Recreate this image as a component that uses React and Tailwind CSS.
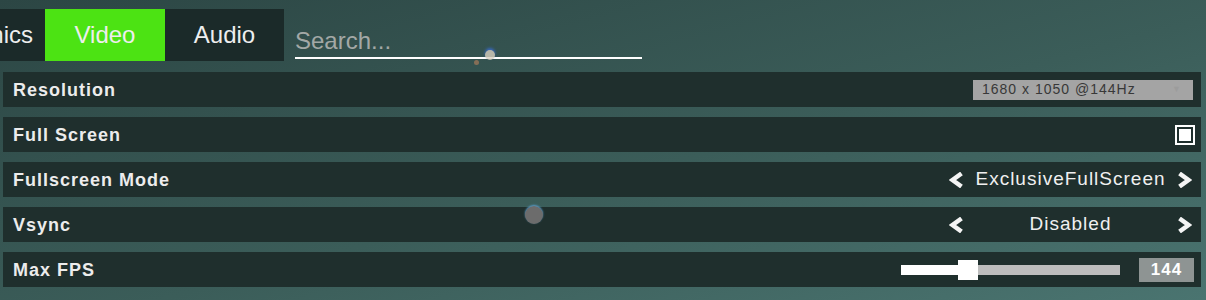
import React from 'react';

function Chevron({ dir }) {
  const pts = dir === 'left' ? '12.5,1.5 3.5,8 12.5,14.5' : '1.5,1.5 10.5,8 1.5,14.5';
  return (
    <svg width="14" height="16" viewBox="0 0 14 16" className="shrink-0">
      <polyline points={pts} fill="none" stroke="#f4f4f4" strokeWidth="4.5" strokeLinejoin="miter" />
    </svg>
  );
}

function Row({ label, children }) {
  return (
    <div className="h-[35px] flex items-center justify-between pl-[10px] bg-[#1f2f2d]">
      <span className="pt-[2px] text-[18px] font-bold tracking-[1px] text-[#ececec]">{label}</span>
      {children}
    </div>
  );
}

function Selector({ value }) {
  return (
    <div className="flex items-center mr-[9px]">
      <Chevron dir="left" />
      <span className="w-[215px] text-center text-[19px] tracking-[1px] text-[#f0f0f0]">{value}</span>
      <Chevron dir="right" />
    </div>
  );
}

export default function App() {
  return (
    <div className="relative w-full h-[300px] overflow-hidden font-['Liberation_Sans',Arial,sans-serif] bg-[linear-gradient(165deg,#2c4644_0%,#3b5d59_55%,#4a7470_100%)]">
      <div className="flex items-end pt-[9px]">
        <div className="flex ml-[-110px] text-[24px] text-[#eeeeee]">
          <div className="h-[52px] w-[155px] flex items-center justify-end pr-[12px] bg-[#1b2a29]">Graphics</div>
          <div className="h-[52px] w-[120px] flex items-center justify-center bg-[#4ce313]">Video</div>
          <div className="h-[52px] w-[119px] flex items-center justify-center bg-[#1b2a29]">Audio</div>
        </div>
        <div className="ml-[11px] mb-[2px] w-[347px] border-b-2 border-white pb-[2px]">
          <div className="text-[24px] leading-[28px] text-[#a3a8a6]">Search...</div>
        </div>
      </div>

      <div className="mt-[11px] ml-[3px] mr-[5px] flex flex-col gap-[10px]">
        <Row label="Resolution">
          <div className="mr-[8px] w-[220px] h-[20px] bg-[#a4a4a4] flex items-center justify-between pl-[9px] pr-[12px]">
            <span className="text-[14px] tracking-[1px] text-[#383838]">1680 x 1050 @144Hz</span>
            <span className="text-[9px] text-[#9c9c9c]">▼</span>
          </div>
        </Row>
        <Row label="Full Screen">
          <div className="mr-[6px] w-[20px] h-[20px] border-2 border-white p-[2px]">
            <div className="w-full h-full bg-white" />
          </div>
        </Row>
        <Row label="Fullscreen Mode">
          <Selector value="ExclusiveFullScreen" />
        </Row>
        <Row label="Vsync">
          <Selector value="Disabled" />
        </Row>
        <Row label="Max FPS">
          <div className="flex items-center mr-[7px]">
            <div className="relative w-[219px] h-[10px] bg-[#bdbdbd]">
              <div className="h-full w-[67px] bg-white" />
              <div className="absolute left-[57px] top-[-5px] w-[20px] h-[20px] bg-white" />
            </div>
            <div className="ml-[19px] w-[55px] h-[24px] bg-[#8e9493] flex items-center justify-center text-[17px] font-bold tracking-[1px] text-white">
              144
            </div>
          </div>
        </Row>
      </div>

      {/* lens flare spots over the ui */}
      <div className="absolute left-[485px] top-[50px] w-[10px] h-[10px] rounded-full bg-[#d8cfc0] opacity-80 shadow-[0_-2px_3px_#3b6fd8]" />
      <div className="absolute left-[474px] top-[60px] w-[5px] h-[5px] rounded-full bg-[#a87a5a] opacity-70" />
      <div className="absolute left-[525px] top-[206px] w-[18px] h-[18px] rounded-full bg-[#6c6c6c] shadow-[0_-1px_2px_#5aa0d0]" />
    </div>
  );
}
